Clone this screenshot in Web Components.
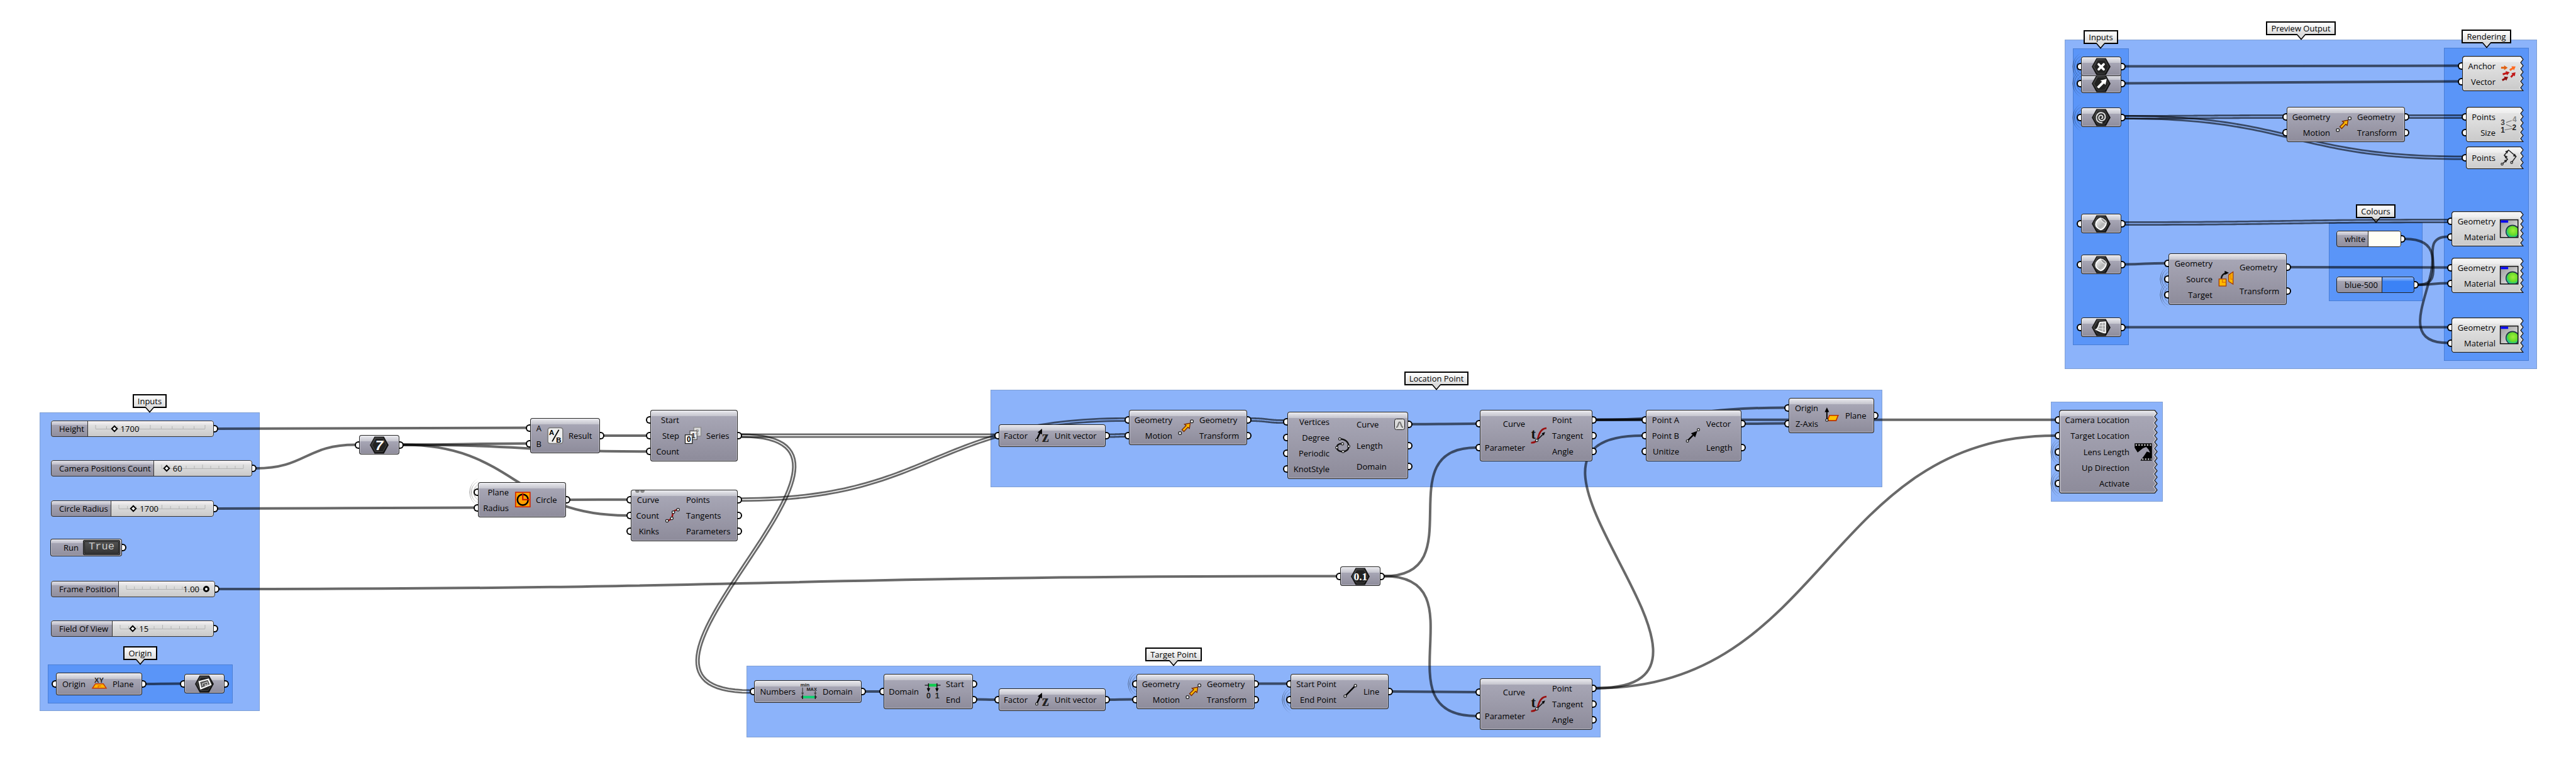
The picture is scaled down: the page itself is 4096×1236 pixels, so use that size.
<!DOCTYPE html>
<html lang="en">
<head>
<meta charset="utf-8">
<title>Camera path definition</title>
<style>
html,body{margin:0;background:#fff}
body{font:13px/18px "Open Sans","Noto Sans",sans-serif;color:#000}
</style>
</head>
<body>
<gh-canvas>
  <!-- groups -->
  <gh-group x="63" y="656" w="350" h="475"><span slot="name">Inputs</span></gh-group>
  <gh-group inner x="76" y="1057" w="294" h="62"><span slot="name">Origin</span></gh-group>
  <gh-group x="1187" y="1059" w="1358" h="114"><span slot="name">Target Point</span></gh-group>
  <gh-group x="1575" y="620" w="1418" h="155"><span slot="name">Location Point</span></gh-group>
  <gh-group x="3261" y="639" w="178" h="159"></gh-group>
  <gh-group x="3283" y="63" w="751" h="524"><span slot="name">Preview Output</span></gh-group>
  <gh-group inner x="3296" y="77" w="89" h="472"><span slot="name">Inputs</span></gh-group>
  <gh-group inner x="3886" y="76" w="135" h="498"><span slot="name">Rendering</span></gh-group>
  <gh-group inner x="3703" y="354" w="149" h="125"><span slot="name">Colours</span></gh-group>

  <gh-wires></gh-wires>

  <!-- input sliders -->
  <gh-slider id="height" x="81" y="669" w="259" label="Height" label-width="59" value="17" text="1700"></gh-slider>
  <gh-slider id="count" x="81" y="732" w="320" label="Camera Positions Count" label-width="164" value="6" text="60"></gh-slider>
  <gh-slider id="radius" x="81" y="796" w="259" label="Circle Radius" label-width="96" value="17" text="1700"></gh-slider>
  <gh-toggle id="run" x="80" y="857" w="114" label="Run">True</gh-toggle>
  <gh-slider id="frame" x="81" y="924" w="261" label="Frame Position" label-width="108" value="100" text="1.00" round></gh-slider>
  <gh-slider id="fov" x="81" y="987" w="259" label="Field Of View" label-width="98" value="15" text="15"></gh-slider>

  <gh-node id="xy" x="89" y="1070" w="137" h="36" in="47">
    <gh-port slot="in">Origin</gh-port><gh-icon slot="icon" name="xyplane"></gh-icon><gh-port slot="out">Plane</gh-port>
  </gh-node>
  <gh-param id="pln" x="293" y="1072"><gh-icon name="hexPlane"></gh-icon></gh-param>

  <!-- spacing -->
  <gh-param id="seven" x="571" y="692"><gh-icon name="hexSeven"></gh-icon></gh-param>
  <gh-node id="div" x="843" y="665" w="111" h="56" in="18">
    <gh-port slot="in">A</gh-port><gh-port slot="in">B</gh-port><gh-icon slot="icon" name="divide"></gh-icon><gh-port slot="out">Result</gh-port>
  </gh-node>
  <gh-node id="series" x="1034" y="652" w="139" h="82" in="46">
    <gh-port slot="in">Start</gh-port><gh-port slot="in">Step</gh-port><gh-port slot="in">Count</gh-port><gh-icon slot="icon" name="series"></gh-icon><gh-port slot="out">Series</gh-port>
  </gh-node>
  <gh-node id="circle" x="760" y="767" w="140" h="56" in="49">
    <gh-port slot="in" hidden-wire>Plane</gh-port><gh-port slot="in">Radius</gh-port><gh-icon slot="icon" name="circle"></gh-icon><gh-port slot="out">Circle</gh-port>
  </gh-node>
  <gh-node id="divide" x="1003" y="779" w="170" h="82" in="45" principal>
    <gh-port slot="in">Curve</gh-port><gh-port slot="in">Count</gh-port><gh-port slot="in">Kinks</gh-port><gh-icon slot="icon" name="divideCurve"></gh-icon><gh-port slot="out">Points</gh-port><gh-port slot="out">Tangents</gh-port><gh-port slot="out">Parameters</gh-port>
  </gh-node>

  <!-- location point -->
  <gh-node id="z1" x="1588" y="675" w="170" h="36" in="46">
    <gh-port slot="in">Factor</gh-port><gh-icon slot="icon" name="unitZ"></gh-icon><gh-port slot="out">Unit vector</gh-port>
  </gh-node>
  <gh-node id="move1" x="1795" y="652" w="188" h="56" in="69">
    <gh-port slot="in">Geometry</gh-port><gh-port slot="in">Motion</gh-port><gh-icon slot="icon" name="move"></gh-icon><gh-port slot="out">Geometry</gh-port><gh-port slot="out">Transform</gh-port>
  </gh-node>
  <gh-node id="interp" x="2047" y="655" w="192" h="107" in="67">
    <gh-port slot="in">Vertices</gh-port><gh-port slot="in">Degree</gh-port><gh-port slot="in">Periodic</gh-port><gh-port slot="in">KnotStyle</gh-port><gh-icon slot="icon" name="interpolate"></gh-icon><gh-port slot="out" tag>Curve</gh-port><gh-port slot="out">Length</gh-port><gh-port slot="out">Domain</gh-port>
  </gh-node>
  <gh-node id="eval1" x="2353" y="652" w="179" h="82" in="72">
    <gh-port slot="in">Curve</gh-port><gh-port slot="in">Parameter</gh-port><gh-icon slot="icon" name="evaluate"></gh-icon><gh-port slot="out">Point</gh-port><gh-port slot="out">Tangent</gh-port><gh-port slot="out">Angle</gh-port>
  </gh-node>
  <gh-node id="vec" x="2617" y="652" w="152" h="82" in="53">
    <gh-port slot="in">Point A</gh-port><gh-port slot="in">Point B</gh-port><gh-port slot="in">Unitize</gh-port><gh-icon slot="icon" name="vector"></gh-icon><gh-port slot="out">Vector</gh-port><gh-port slot="out">Length</gh-port>
  </gh-node>
  <gh-node id="normal" x="2844" y="633" w="136" h="56" in="47">
    <gh-port slot="in">Origin</gh-port><gh-port slot="in">Z-Axis</gh-port><gh-icon slot="icon" name="planeNormal"></gh-icon><gh-port slot="out">Plane</gh-port>
  </gh-node>

  <!-- target point -->
  <gh-param id="number" x="2131" y="901"><gh-icon name="hexNumber"></gh-icon></gh-param>
  <gh-node id="bounds" x="1199" y="1082" w="171" h="36" in="66">
    <gh-port slot="in">Numbers</gh-port><gh-icon slot="icon" name="bounds"></gh-icon><gh-port slot="out">Domain</gh-port>
  </gh-node>
  <gh-node id="dedom" x="1405" y="1072" w="142" h="56" in="56">
    <gh-port slot="in">Domain</gh-port><gh-icon slot="icon" name="deDomain"></gh-icon><gh-port slot="out">Start</gh-port><gh-port slot="out">End</gh-port>
  </gh-node>
  <gh-node id="z2" x="1588" y="1095" w="170" h="36" in="46">
    <gh-port slot="in">Factor</gh-port><gh-icon slot="icon" name="unitZ"></gh-icon><gh-port slot="out">Unit vector</gh-port>
  </gh-node>
  <gh-node id="move2" x="1807" y="1072" w="188" h="56" in="69">
    <gh-port slot="in" hidden-wire>Geometry</gh-port><gh-port slot="in">Motion</gh-port><gh-icon slot="icon" name="move"></gh-icon><gh-port slot="out">Geometry</gh-port><gh-port slot="out">Transform</gh-port>
  </gh-node>
  <gh-node id="line" x="2052" y="1072" w="156" h="56" in="73">
    <gh-port slot="in">Start Point</gh-port><gh-port slot="in" hidden-wire>End Point</gh-port><gh-icon slot="icon" name="line"></gh-icon><gh-port slot="out">Line</gh-port>
  </gh-node>
  <gh-node id="eval2" x="2353" y="1079" w="179" h="82" in="72">
    <gh-port slot="in">Curve</gh-port><gh-port slot="in">Parameter</gh-port><gh-icon slot="icon" name="evaluate"></gh-icon><gh-port slot="out">Point</gh-port><gh-port slot="out">Tangent</gh-port><gh-port slot="out">Angle</gh-port>
  </gh-node>

  <!-- camera -->
  <gh-node id="camera" torn x="3274" y="652" w="157" h="133" in="112">
    <gh-port slot="in">Camera Location</gh-port><gh-port slot="in">Target Location</gh-port><gh-port slot="in" hidden-wire>Lens Length</gh-port><gh-port slot="in">Up Direction</gh-port><gh-port slot="in" hidden-wire>Activate</gh-port><gh-icon slot="icon" name="film"></gh-icon>
  </gh-node>

  <!-- preview -->
  <gh-param id="p2" hidden-wire x="3309" y="117"><gh-icon name="hexVector"></gh-icon></gh-param>
  <gh-param id="p1" hidden-wire x="3309" y="90"><gh-icon name="hexPoint"></gh-icon></gh-param>
  <gh-param id="p3" hidden-wire x="3309" y="171"><gh-icon name="hexCurve"></gh-icon></gh-param>
  <gh-param id="p4" x="3309" y="340"><gh-icon name="hexBrep"></gh-icon></gh-param>
  <gh-param id="p5" x="3309" y="405"><gh-icon name="hexBrep"></gh-icon></gh-param>
  <gh-param id="p6" x="3309" y="505"><gh-icon name="hexSurface"></gh-icon></gh-param>
  <gh-node id="move3" x="3636" y="170" w="188" h="56" in="69">
    <gh-port slot="in">Geometry</gh-port><gh-port slot="in">Motion</gh-port><gh-icon slot="icon" name="move"></gh-icon><gh-port slot="out">Geometry</gh-port><gh-port slot="out">Transform</gh-port>
  </gh-node>
  <gh-node id="orient" x="3448" y="403" w="188" h="82" in="70">
    <gh-port slot="in">Geometry</gh-port><gh-port slot="in" hidden-wire>Source</gh-port><gh-port slot="in" hidden-wire>Target</gh-port><gh-icon slot="icon" name="orient"></gh-icon><gh-port slot="out">Geometry</gh-port><gh-port slot="out">Transform</gh-port>
  </gh-node>
  <gh-swatch id="white" x="3715" y="367" w="103" label="white" label-width="51" color="#fffff5"></gh-swatch>
  <gh-swatch id="blue" x="3715" y="440" w="124" label="blue-500" label-width="73" color="#3b82f6"></gh-swatch>
  <gh-node id="vdisp" torn light x="3915" y="89" w="98" h="56" in="53">
    <gh-port slot="in">Anchor</gh-port><gh-port slot="in">Vector</gh-port><gh-icon slot="icon" name="vectors"></gh-icon>
  </gh-node>
  <gh-node id="pdisp" torn light x="3921" y="170" w="92" h="56" in="47">
    <gh-port slot="in">Points</gh-port><gh-port slot="in">Size</gh-port><gh-icon slot="icon" name="pointList"></gh-icon>
  </gh-node>
  <gh-node id="porder" torn light x="3921" y="233" w="92" h="36" in="47">
    <gh-port slot="in">Points</gh-port><gh-icon slot="icon" name="pointOrder"></gh-icon>
  </gh-node>
  <gh-node id="mat1" torn light x="3898" y="336" w="115" h="56" in="70">
    <gh-port slot="in">Geometry</gh-port><gh-port slot="in">Material</gh-port><gh-icon slot="icon" name="material"></gh-icon>
  </gh-node>
  <gh-node id="mat2" torn light x="3898" y="410" w="115" h="56" in="70">
    <gh-port slot="in">Geometry</gh-port><gh-port slot="in">Material</gh-port><gh-icon slot="icon" name="material"></gh-icon>
  </gh-node>
  <gh-node id="mat3" torn light x="3898" y="505" w="115" h="56" in="70">
    <gh-port slot="in">Geometry</gh-port><gh-port slot="in">Material</gh-port><gh-icon slot="icon" name="material"></gh-icon>
  </gh-node>
</gh-canvas>

<script>
const METAL = 'linear-gradient(#efeff3,#c4c4cd 10px,#a7a6b5 10px,#8d8b9a)';
const METAL_SLIM = 'linear-gradient(#e8e8ee,#bdbcc8 7px,#a5a4b3 7px,#8f8d9c)';
const GRIP_CSS = `
  .grip{position:absolute;top:50%;width:7px;height:12px;margin-top:-6px;box-sizing:border-box;border:2px solid #000;background:#fff}
  .grip.in{right:100%;border-right:0;border-radius:7px 0 0 7px}
  .grip.out{left:100%;border-left:0;border-radius:0 7px 7px 0}
  .rings{position:absolute;right:100%;top:50%;width:20px;height:56px;margin-top:-28px;display:block;pointer-events:none}`;
const RINGS = `<svg class="rings" viewBox="0 0 20 56" aria-hidden="true"><defs><linearGradient id="f" x1="0" y1="0" x2="0" y2="56" gradientUnits="userSpaceOnUse"><stop offset=".1" stop-opacity="0"/><stop offset=".5" stop-opacity=".45"/><stop offset=".9" stop-opacity="0"/></linearGradient></defs><g fill="none" stroke="url(#f)"><path d="M20 6A25 25 0 0 0 20 50M20 11A19 19 0 0 0 20 45M20 16A14 14 0 0 0 20 40"/></g></svg>`;

/* Everything that is dropped on the canvas reads its place from attributes. */
class CanvasItem extends HTMLElement {
  connectedCallback() {
    const s = this.style, n = a => this.getAttribute(a);
    s.position = 'absolute';
    s.left = n('x') + 'px';
    s.top = n('y') + 'px';
    if (n('w')) s.width = n('w') + 'px';
    if (n('h')) s.height = n('h') + 'px';
    if (!this.shadowRoot) {
      this.attachShadow({ mode: 'open' });
      this.shadowRoot.innerHTML = `<style>:host{display:flex;box-sizing:border-box}${GRIP_CSS}${this.css()}</style>${this.html()}`;
    }
  }
  css() { return ''; }
  html() { return ''; }
  grip(side) { return this.shadowRoot.querySelector('.grip.' + side); }
}

customElements.define('gh-canvas', class extends HTMLElement {
  constructor() {
    super();
    this.attachShadow({ mode: 'open' }).innerHTML = `<style>:host{display:block;position:relative;width:100%;min-height:100vh;overflow:hidden;background:#fff}</style><slot></slot>`;
  }
});

customElements.define('gh-group', class extends CanvasItem {
  css() {
    return `:host{background:#8cb3fa;border:1px solid #7f9fd4;justify-content:center;align-items:flex-start}
    :host([inner]){background:#5a95f8;border-color:#4a7ed6}
    .tag{position:relative;flex:none;box-sizing:border-box;height:22px;margin-top:-30px;padding:0 6px;line-height:18px;border:2px solid #000;background:linear-gradient(#fff,#dcdcdc);white-space:nowrap}
    .tag svg{position:absolute;left:50%;top:18px;margin-left:-8px;width:16px;height:11px;display:block}`;
  }
  html() {
    return this.children.length ? `<div class="tag"><slot name="name"></slot><svg viewBox="0 0 16 11" aria-hidden="true"><path d="M1 0H15L8 8.500Z" fill="#dcdcdc"/><path d="M0 1H1.500L8 8.500L14.500 1H16" fill="none" stroke="#000" stroke-width="1.500"/></svg></div>` : '';
  }
});

customElements.define('gh-port', class extends HTMLElement {
  connectedCallback() {
    if (this.shadowRoot) return;
    const side = this.getAttribute('slot');
    this.attachShadow({ mode: 'open' }).innerHTML = `<style>
      :host{position:relative;display:flex;flex:1;align-items:center;white-space:nowrap;line-height:18px}
      :host([slot=in]){justify-content:flex-end}
      :host([slot=out]){justify-content:flex-start}
      .tag{position:absolute;right:5px;width:17px;height:18px;display:block}
      ${GRIP_CSS}</style>
      ${this.hasAttribute('hidden-wire') ? RINGS : ''}<span class="grip ${side}"></span><slot></slot>
      ${this.hasAttribute('tag') ? '<svg class="tag" viewBox="0 0 17 18" aria-hidden="true"><rect x=".5" y=".5" width="16" height="17" rx="3" fill="#dcdcdc" stroke="#222"/><path d="M3 14C7 13 6 5.500 8.500 5.500S10 13 14 14" fill="none" stroke="#777" stroke-width="2.200"/></svg>' : ''}`;
  }
});

customElements.define('gh-node', class extends CanvasItem {
  css() {
    return `
    :host{border-radius:4px}
    .body{position:relative;display:flex;width:100%;box-sizing:border-box;padding:3px 0;border-radius:4px;background:${METAL};box-shadow:inset 0 0 0 1px #222,inset 0 0 0 2px rgba(255,255,255,.35)}
    :host([torn]) .body{background:none;box-shadow:none}
    .torn{position:absolute;left:0;top:0;width:100%;height:100%;display:block}
    .in,.out{position:relative;display:flex;flex-direction:column}
    .col.in{width:${this.getAttribute('in')}px}
    .col.out{flex:1}
    .icon{position:relative;display:flex;flex:none;width:43px;align-items:center;justify-content:center}
    :host([torn]) .icon{width:45px;justify-content:flex-start;box-sizing:border-box;padding-left:7px}
    .marks{position:absolute;left:7px;top:1px;width:16px;height:4px;display:block}`;
  }
  html() {
    let torn = '';
    if (this.hasAttribute('torn')) {
      const w = +this.getAttribute('w'), h = +this.getAttribute('h'), light = this.hasAttribute('light');
      const n = Math.round(h / 5.1);
      let d = `M${w - 5} .5`;
      for (let i = 1; i <= n; i++) d += `L${i % 2 ? w - 1 : w - 5} ${(.5 + i * (h - 1) / n).toFixed(2)}`;
      d += `H4.500A4 4 0 0 1 .5 ${h - 4.5}V4.500A4 4 0 0 1 4.500 .5Z`;
      const c = light ? ['#fafafa', '#ececec', '#e4e4e4', '#c9c9c9'] : ['#efeff3', '#c4c4cd', '#a7a6b5', '#8d8b9a'];
      torn = `<svg class="torn" viewBox="0 0 ${w} ${h}" aria-hidden="true"><defs><linearGradient id="m" x1="0" y1="0" x2="0" y2="${h}" gradientUnits="userSpaceOnUse"><stop offset="0" stop-color="${c[0]}"/><stop offset="${10 / h}" stop-color="${c[1]}"/><stop offset="${10 / h}" stop-color="${c[2]}"/><stop offset="1" stop-color="${c[3]}"/></linearGradient><clipPath id="k"><path d="${d}"/></clipPath></defs><path d="${d}" fill="url(#m)"/><path d="${d}" clip-path="url(#k)" fill="none" stroke="#fff" stroke-opacity=".5" stroke-width="4"/><path d="${d}" fill="none" stroke="#222" stroke-width="1.300"/></svg>`;
    }
    const marks = this.hasAttribute('principal') ? '<svg class="marks" viewBox="0 0 16 4" aria-hidden="true"><path d="M0 0A3.500 4 0 0 0 7 0M8 0A3.500 4 0 0 0 15 0" fill="#888"/></svg>' : '';
    return `<div class="body">${torn}${marks}<div class="col in"><slot name="in"></slot></div><div class="icon"><slot name="icon"></slot></div><div class="col out"><slot name="out"></slot></div></div>`;
  }
  grip(side, i) {
    return this.querySelectorAll(`gh-port[slot=${side}]`)[i].shadowRoot.querySelector('.grip');
  }
});

customElements.define('gh-param', class extends CanvasItem {
  css() {
    return `:host{width:64px;height:31px}
    .body{position:relative;display:flex;width:100%;align-items:center;justify-content:center;border-radius:4px;background:${METAL};box-shadow:inset 0 0 0 1px #222,inset 0 0 0 2px rgba(255,255,255,.35)}`;
  }
  html() { return `${this.hasAttribute('hidden-wire') ? RINGS : ''}<span class="grip in"></span><div class="body"><slot></slot></div><span class="grip out"></span>`; }
});

customElements.define('gh-slider', class extends CanvasItem {
  css() {
    return `:host{height:26px}
    .body{position:relative;display:flex;width:100%;border-radius:4px;overflow:hidden;background:linear-gradient(#faf6f8,#e4e3e4 7px,#e0e0e0 7px,#c8c8c8)}
    .body::after{content:"";position:absolute;inset:0;border-radius:4px;box-shadow:inset 0 0 0 1px #333;pointer-events:none}
    label{flex:none;width:${this.getAttribute('label-width')}px;box-sizing:border-box;border-right:1px solid #333;padding-left:13px;line-height:26px;white-space:nowrap;background:${METAL_SLIM}}
    .track{position:relative;flex:1;margin:0 14px 0 12px;display:flex;align-items:center}
    svg{position:absolute;left:0;top:0;width:100%;height:26px;display:block}
    input{position:relative;-webkit-appearance:none;appearance:none;flex:1;min-width:0;height:26px;margin:0 -4px;background:none}
    input::-webkit-slider-thumb{-webkit-appearance:none;width:8px;height:8px;box-sizing:border-box;border:2px solid #000;background:#fff;transform:rotate(45deg)}
    :host([round]) input{margin:0 -5px}
    :host([round]) input::-webkit-slider-thumb{border-radius:50%;border-width:3px;width:10px;height:10px}
    output{position:absolute;left:calc(var(--v)*1% + 10px);line-height:26px}
    :host([round]) output{left:auto;right:11px}`;
  }
  html() {
    const v = this.getAttribute('value'), t = this.getAttribute('text');
    this.style.setProperty('--v', v);
    let ticks = '';
    for (let i = 0; i <= 10; i++) {
      const x = i * 10 + '%';
      ticks += `<line x1="${x}" x2="${x}" y1="${i % 5 ? 9 : 7}" y2="13"/>`;
    }
    return `<div class="body"><label for="r">${this.getAttribute('label')}</label><div class="track"><svg aria-hidden="true" overflow="visible"><g stroke="#b4b4b4">${ticks}<line x1="0" x2="100%" y1="13.500" y2="13.500"/></g></svg><input id="r" type="range" min="0" max="100" value="${v}"><output for="r">${t}</output></div></div><span class="grip out"></span>`;
  }
});

customElements.define('gh-toggle', class extends CanvasItem {
  css() {
    return `:host{height:28px}
    .body{display:flex;width:100%;align-items:center;box-sizing:border-box;padding:0 3px 0 14px;border-radius:4px;background:${METAL_SLIM};box-shadow:inset 0 0 0 1px #222,inset 0 0 0 2px rgba(255,255,255,.35);justify-content:space-between}
    label{padding-left:7px}
    button{width:59px;height:24px;padding:0 0 3px;border:1px solid #000;border-radius:2px;background:linear-gradient(#555,#333);box-shadow:inset 0 0 0 1px #777,inset 0 0 0 2px #111;color:#ccc;font:17px/18px "Liberation Mono",monospace}`;
  }
  html() { return `<div class="body"><label for="b">${this.getAttribute('label')}</label><button id="b" type="button"><slot></slot></button></div><span class="grip out"></span>`; }
});

customElements.define('gh-swatch', class extends CanvasItem {
  css() {
    return `:host{height:26px}
    .body{position:relative;display:flex;width:100%;border-radius:4px;overflow:hidden;background:${METAL_SLIM}}
    .body::after{content:"";position:absolute;inset:0;border-radius:4px;box-shadow:inset 0 0 0 1px #222;pointer-events:none}
    label{flex:none;width:${this.getAttribute('label-width')}px;box-sizing:border-box;padding-left:13px;line-height:26px;border-right:1px solid #222}
    input{-webkit-appearance:none;appearance:none;flex:1;min-width:0;height:26px;border:0;padding:0;background:none}
    input::-webkit-color-swatch-wrapper{padding:0}
    input::-webkit-color-swatch{border:0;border-radius:0}
    .shine{position:absolute;right:2px;top:1px;left:calc(${this.getAttribute('label-width')}px + 1px);height:6px;background:linear-gradient(rgba(255,255,255,.45),rgba(255,255,255,.1));pointer-events:none}`;
  }
  html() { return `<div class="body"><label for="c">${this.getAttribute('label')}</label><input id="c" type="color" value="${this.getAttribute('color')}"><span class="shine"></span></div><span class="grip out"></span>`; }
});

/* ---- icons, on the 24 unit grid ---- */
const dot = (x, y, r = 1.7) => `<circle cx="${x}" cy="${y}" r="${r}" fill="#fff" stroke="#222" stroke-width="1"/>`;
const head = (x, y, a, s = 1, c = '#000') => `<path d="M0 0L-6 2.800L-6 -2.800Z" fill="${c}" transform="translate(${x} ${y}) rotate(${a}) scale(${s})"/>`;
const hex = inner => `<defs><linearGradient id="h" x1="0" y1="0" x2="1" y2="1"><stop offset="0" stop-color="#555"/><stop offset=".4" stop-color="#2a2a2a"/><stop offset="1" stop-color="#0c0c0c"/></linearGradient><linearGradient id="s" x1="0" y1="0" x2="1" y2="1"><stop offset="0" stop-color="#fff"/><stop offset=".6" stop-color="#b4b4b4"/><stop offset="1" stop-color="#eee"/></linearGradient></defs><path d="M.6 12L6.300 1.700H17.700L23.400 12L17.700 22.300H6.300Z" fill="url(#h)" stroke="#111"/><path d="M2.800 12L7.400 3.600H16.600L21.200 12L16.600 20.400H7.400Z" fill="#222" stroke="#4c4c4c" stroke-width=".7"/>${inner}`;
const arrow = (x1, y1, x2, y2, c) => {
  const a = Math.atan2(y2 - y1, x2 - x1) * 180 / Math.PI, l = Math.hypot(x2 - x1, y2 - y1);
  return `<path d="M0 -1.200H${l - 4.5}V-3L${l} 0L${l - 4.5} 3V1.200H0Z" fill="${c}" transform="translate(${x1} ${y1}) rotate(${a})"/>`;
};
const txt = (x, y, size, s, extra = '') => `<text x="${x}" y="${y}" font-size="${size}" ${extra}>${s}</text>`;
const SERIF = 'font-family="Liberation Serif"', SANS = 'font-family="Liberation Sans"';
const ICONS = {
  hexSeven: hex(txt(7, 18.5, 18, '7', `${SANS} font-weight="700" font-style="italic" fill="#fff"`)),
  hexNumber: hex(txt(3.5, 17, 14, '0.1', `${SERIF} font-weight="700" fill="#fff"`)),
  hexPlane: hex('<path d="M5.500 9L17 6L20 13L7.500 18Z" fill="#555" stroke="#fff" stroke-width="1.800"/><path d="M9.500 14.500V11.500L15.500 9.500L16.500 12.500L13 13.800V12" fill="none" stroke="#ccc"/>'),
  hexPoint: hex('<path d="M8.800 9L15.200 15.500M15.200 9L8.800 15.500" stroke="#fff" stroke-width="3" stroke-linecap="round"/>'),
  hexVector: hex('<path d="M6.500 16.200L13 9.500L11 8L19 6L17.500 13.500L15.500 11.800L9 18.200Z" fill="#fff"/>'),
  hexCurve: hex('<path d="M12 12.500C13 13.800 14.500 12 13.800 10.500C12.500 8 9 9.200 9 12.200C9 15.500 12.500 17 15 15.200C18.500 12.800 17.500 7 13.500 6C9 4.800 5.800 8.500 6 12.500C6.200 16.800 10 19.200 13.500 18.500" fill="none" stroke="#d8d8d8" stroke-width="1.700"/>'),
  hexBrep: hex('<path d="M5 12.500C5 8.500 9 5 11.500 5L18.500 10.500C18.500 14 15 19 11.500 19.500C8 18.500 5 15.500 5 12.500Z" fill="url(#s)" stroke="#fff" stroke-width="1.500"/><path d="M11.800 5.500C13.500 4 19 8.500 18.600 11C17 12.500 11 8 11.800 5.500Z" fill="#999" stroke="#eee" stroke-width="1"/>'),
  hexSurface: hex('<path d="M10.500 5.500L17.500 5V18.500C15 19.500 9 16 5.500 14.500C9.500 12 8.500 8 10.500 5.500Z" fill="#aaa" stroke="#fff" stroke-width="1.400"/><path d="M14 5.500C13.500 9 13.500 13 13.800 17.500M9.500 9.500H17.500M7.500 13L17.500 14" fill="none" stroke="#eee" stroke-width=".8"/>'),
  xyplane: `<path d="M7 11.700H17L20.800 17.400H3.200Z" fill="#ffb400" stroke="#c63a00" stroke-width="1.200"/><path d="M10.500 16.500V14.500H14" fill="none" stroke="#e06000"/>${txt(5.6, 10, 9, 'XY', `${SANS} font-weight="700" fill="#222"`)}`,
  divide: `<rect x="2.500" y="2" width="19" height="20" rx="3" fill="#eee" stroke="#777" stroke-width="1.200"/>${txt(4, 11, 9, 'A', `${SANS} font-weight="700"`)}${txt(13, 20.5, 9, 'B', `${SANS} font-weight="700"`)}<path d="M16.500 4.500L8 19.500" stroke="#000" stroke-width="1.500"/>`,
  series: `<g stroke="#888"><rect x="13" y="1.500" width="9" height="11" fill="#ddd"/><rect x="8" y="6" width="9" height="11" fill="#eee" stroke="#555"/><rect x="2" y="11" width="9" height="11" fill="#fff" stroke="#222"/></g><g ${SANS} font-weight="700">${txt(14.8, 10.5, 9, '2', 'fill="#999"')}${txt(10, 15, 9, '1', 'fill="#333"')}${txt(4, 20, 9.5, '0')}</g>`,
  circle: '<rect x="3" y="2.500" width="18.500" height="18.500" fill="#ffa000" stroke="#d02800" stroke-width="1.300"/><circle cx="12.200" cy="12" r="6.800" fill="none" stroke="#000" stroke-width="2"/><path d="M12.200 3.500V11.800H20.500" fill="none" stroke="#c81400" stroke-width="1.700"/>',
  divideCurve: `<path d="M4.500 18.700C8 18 10.500 17 11 14S11.500 9.500 12.500 7.500S15.500 5 18.500 4.500" fill="none" stroke="#a01010" stroke-width="2"/>${dot(4.5, 18.7)}${dot(10.6, 15.6)}${dot(12.5, 7.7)}${dot(18.5, 4.5)}`,
  unitZ: `<path d="M6 17L10.500 7.500" stroke="#000" stroke-width="2"/>${head(12.7, 3.2, -65, 1.1)}${dot(6, 17.4, 1.5)}${txt(12.5, 20, 20, 'z', `${SERIF} font-weight="700" fill="#222"`)}`,
  move: `<path d="M6.800 14.800L12 9.600L10 8L17.200 6.500L16.200 13.200L14.300 11.700L9.200 17.200Z" fill="#ffb800" stroke="#7a2a00" stroke-width="1.100"/>${dot(4.2, 19.1, 1.9)}${dot(19.3, 4.1, 1.9)}`,
  interpolate: `<path d="M10.900 9.600C6.500 9 3.700 11 3.700 14.400C4 18 7.500 19.800 11.600 19.400C16 19.400 19 16.500 18.800 12.600C18.500 7 14 3.500 7.500 3.400" fill="none" stroke="#111" stroke-width="1.900"/>${dot(10.9, 9.6, 1.5)}${dot(3.7, 14.4, 1.5)}${dot(11.6, 19.4, 1.5)}${dot(18.8, 12.6, 1.5)}${dot(7.5, 3.4, 1.5)}`,
  evaluate: `<path d="M2 21C7 21 10 19 11 14.500S14 3 21.600 2.500" fill="none" stroke="#9a1010" stroke-width="2.200"/>${txt(2, 16, 18, 't', `${SERIF} font-weight="700" fill="#111"`)}<path d="M9.300 18L17 10.500" stroke="#111" stroke-width="1.200"/>${head(19.8, 7.4, -45, .7)}${dot(9.3, 18, 1.6)}`,
  vector: `<path d="M5.500 18L12 11.500" stroke="#000" stroke-width="1.800"/>${head(17.5, 6, -46, 1.3)}${dot(4.9, 18.8, 1.5)}${dot(18.9, 4.4, 1.5)}`,
  planeNormal: `<path d="M8.800 11.800H19.800L17.200 18.500H6Z" fill="#ffc000" stroke="#b83000" stroke-width="1.300"/><path d="M5.500 17V7" stroke="#000" stroke-width="1.500"/>${head(5.5, 1.5, -90, 1)}${dot(5.5, 17.8, 1.5)}`,
  bounds: `<g stroke="#444"><path d="M3.300 7V14M19.500 11V14" stroke-width="1"/><path d="M1.300 19H21.500" stroke="#111"/></g>${head(3.3, 17, 90, .6, '#444')}${head(19.5, 17, 90, .6, '#444')}<rect x="3.800" y="17.500" width="15" height="3.200" fill="#10d070"/><path d="M3.300 16.700V21.500M19.500 16.700V21.500" stroke="#111" stroke-width="1.200"/>${txt(.6, 5.5, 6.5, 'min', `${SANS} font-weight="700" fill="#222"`)}${txt(8.3, 11, 6, 'MAX', `${SANS} font-weight="700" fill="#222"`)}`,
  deDomain: `<path d="M2 4H22" stroke="#111"/><rect x="7" y="2.200" width="10" height="3.600" fill="#10cc50"/><path d="M6.700 1.500V10M17.500 1.500V10" stroke="#111" stroke-width="1.200"/>${head(6.7, 12.5, 90, .8)}${head(17.5, 12.5, 90, .8)}${txt(4, 21, 10, '0', `${SANS} font-weight="700" fill="#222"`)}${txt(15, 21, 10, '1', `${SANS} font-weight="700" fill="#222"`)}`,
  line: `<path d="M5.500 17.800L18.500 4.500" stroke="#000" stroke-width="2"/>${dot(5.5, 17.8, 1.6)}${dot(18.5, 4.5, 1.6)}`,
  orient: `<path d="M5.600 11C6 7.500 8 5.300 11 4.500" fill="none" stroke="#111" stroke-width="2"/>${head(15.3, 4, 0, .9)}<g fill="#ffb800" stroke="#a03800" stroke-width="1"><rect x="2.700" y="11.800" width="9" height="9"/><path d="M20.600 2.700V18.500L15 15V6.500Z"/><path d="M7 12V16H11.500M17.800 6V12H20.500" fill="none" stroke="#e07000"/></g>`,
  film: '<path d="M1 1H23V23H8.300L13.200 16.300L16.500 11.300L20.700 12.700L18.500 8.500L15.700 5.500L11.500 7.200L4.800 12.500L1 6.500Z" fill="#000"/><path d="M2.200 3H22.500M10.500 21H22.500" stroke="#ccc" stroke-width="1.800" stroke-dasharray="1.800 1.800"/>',
  vectors: `${arrow(1.5, 4.5, 9.9, 4.5, '#e06010')}${arrow(12.6, 7.7, 20, 3, '#ff6a20')}${arrow(3.6, 13, 12.4, 10.3, '#c01818')}${arrow(3, 20.5, 10.5, 16.3, '#8e1010')}${arrow(14, 16.6, 19.8, 10.3, '#c01818')}`,
  pointList: `<path d="M8 9.500L15 7M8 12L15 15M6 19L16 17" stroke="#777"/><g font-family="Liberation Sans" font-weight="700">${txt(1, 13, 9.5, '3', 'fill="#444"')}${txt(16, 8.5, 9.5, '4', 'fill="#888"')}${txt(1, 22.5, 9.5, '1', 'fill="#222"')}${txt(15.5, 19.5, 9.5, '2', 'fill="#222"')}</g>`,
  pointOrder: `<path d="M2.800 20L9.700 14L5.500 8.800L11 2.200L20.600 10.300L14.900 18" fill="none" stroke="#222" stroke-width="1.200"/>${head(9.7, 14, -40, .7, '#222')}${head(5.8, 8.6, -130, .7, '#222')}${head(11, 2.2, -45, .7, '#222')}${head(21, 11, 40, .7, '#222')}<g fill="#eee" stroke="#222"><circle cx="2.800" cy="20" r="1.300"/><circle cx="14.900" cy="18" r="1.300"/></g>`,
  material: '<defs><linearGradient id="g" x1="0" y1="0" x2="1" y2="1"><stop offset="0" stop-color="#999"/><stop offset="1" stop-color="#eee"/></linearGradient><radialGradient id="b" cx=".55" cy=".4" r=".6"><stop offset="0" stop-color="#a0ee40"/><stop offset=".6" stop-color="#68dc28"/><stop offset=".85" stop-color="#30c870"/><stop offset="1" stop-color="#10c0b0"/></radialGradient><clipPath id="c"><rect x=".5" y=".5" width="22.500" height="22.500"/></clipPath></defs><rect x=".5" y=".5" width="22.500" height="22.500" fill="url(#g)"/><g clip-path="url(#c)"><circle cx="16" cy="15.500" r="8.800" fill="#234"/><circle cx="16" cy="15.800" r="7.700" fill="url(#b)"/></g><rect x=".5" y=".5" width="22.500" height="22.500" fill="none" stroke="#111" stroke-width="1.200"/><rect x="1" y="1.200" width="9.500" height="3" fill="#0808f0"/>'
};
customElements.define('gh-icon', class extends HTMLElement {
  connectedCallback() {
    if (this.shadowRoot) return;
    this.attachShadow({ mode: 'open' }).innerHTML = `<style>:host{display:block;width:30px;height:30px;flex:none}svg{display:block;width:100%;height:100%;overflow:visible}</style><svg viewBox="0 0 24 24" aria-hidden="true">${ICONS[this.getAttribute('name')]}</svg>`;
  }
});

/* ---- wires: [from, output, to, input, double] ---- */
const WIRES = [
  ['height', 0, 'div', 0], ['count', 0, 'seven', 0], ['seven', 0, 'div', 1], ['seven', 0, 'series', 2], ['seven', 0, 'divide', 1],
  ['div', 0, 'series', 1], ['radius', 0, 'circle', 1], ['circle', 0, 'divide', 0], ['xy', 0, 'pln', 0],
  ['series', 0, 'z1', 0, 1], ['series', 0, 'bounds', 0, 1], ['divide', 0, 'move1', 0, 1], ['z1', 0, 'move1', 1, 1],
  ['move1', 0, 'interp', 0, 1], ['interp', 0, 'eval1', 0], ['frame', 0, 'number', 0], ['number', 0, 'eval1', 1], ['number', 0, 'eval2', 1],
  ['eval1', 0, 'vec', 0], ['eval1', 0, 'normal', 0], ['eval1', 0, 'camera', 0], ['vec', 0, 'normal', 1],
  ['bounds', 0, 'dedom', 0], ['dedom', 1, 'z2', 0], ['z2', 0, 'move2', 1], ['move2', 0, 'line', 0], ['line', 0, 'eval2', 0],
  ['eval2', 0, 'vec', 1], ['eval2', 0, 'camera', 1],
  ['p1', 0, 'vdisp', 0], ['p2', 0, 'vdisp', 1], ['p3', 0, 'move3', 0, 1], ['p3', 0, 'porder', 0, 1], ['move3', 0, 'pdisp', 0, 1],
  ['p4', 0, 'mat1', 0, 1], ['p5', 0, 'orient', 0], ['orient', 0, 'mat2', 0], ['p6', 0, 'mat3', 0],
  ['white', 0, 'mat3', 1], ['blue', 0, 'mat1', 1], ['blue', 0, 'mat2', 1]
];
customElements.define('gh-wires', class extends HTMLElement {
  connectedCallback() {
    if (!this.shadowRoot) this.attachShadow({ mode: 'open' }).innerHTML = `<style>:host{position:absolute;inset:0}svg{display:block;width:100%;height:100%;fill:none;stroke:#000;stroke-opacity:.59}</style><svg aria-hidden="true"></svg>`;
    this.draw();
    new ResizeObserver(() => this.draw()).observe(this);
  }
  draw() {
    const o = this.getBoundingClientRect();
    this.shadowRoot.querySelector('svg').innerHTML = WIRES.map(([a, i, b, j, dbl]) => {
      const p = document.getElementById(a).grip('out', i).getBoundingClientRect();
      const q = document.getElementById(b).grip('in', j).getBoundingClientRect();
      const x0 = p.right - o.left - 1, y0 = (p.top + p.bottom) / 2 - o.top, x3 = q.left - o.left + 1, y3 = (q.top + q.bottom) / 2 - o.top;
      const c = Math.max(Math.abs(x3 - x0) / 2, Math.abs(y3 - y0) * .7), x1 = x0 + c, x2 = x3 - c;
      if (!dbl) return `<path stroke-width="4" d="M${x0} ${y0}C${x1} ${y0} ${x2} ${y3} ${x3} ${y3}"/>`;
      /* list data: two strands, each offset along the curve's normal */
      return [-2.1, 2.1].map(k => {
        let d = '';
        for (let n = 0; n <= 64; n++) {
          const t = n / 64, u = 1 - t;
          const x = u * u * u * x0 + 3 * u * u * t * x1 + 3 * u * t * t * x2 + t * t * t * x3;
          const y = u * u * (u + 3 * t) * y0 + t * t * (t + 3 * u) * y3;
          const dx = u * u * (x1 - x0) + 2 * u * t * (x2 - x1) + t * t * (x3 - x2), dy = 2 * u * t * (y3 - y0), l = Math.hypot(dx, dy) || 1;
          d += (n ? 'L' : 'M') + (x - k * dy / l).toFixed(2) + ' ' + (y + k * dx / l).toFixed(2);
        }
        return `<path stroke-width="2.800" d="${d}"/>`;
      }).join('');
    }).join('');
  }
});
</script>
</body>
</html>
